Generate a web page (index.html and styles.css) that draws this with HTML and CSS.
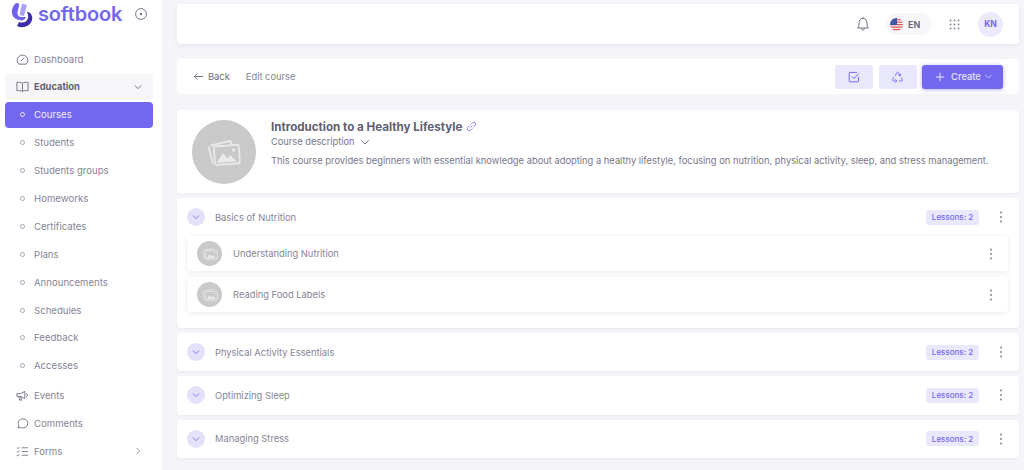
FILE: index.html
```html
<!DOCTYPE html>
<html lang="en">
<head>
<meta charset="utf-8">
<title>Edit course</title>
<link rel="stylesheet" href="styles.css">
</head>
<body>
<svg class="defs" width="0" height="0" aria-hidden="true">
  <symbol id="pic" viewBox="0 0 32 26">
    <path d="M3 7 L22 2.5 L23.5 7" fill="none" stroke="currentColor" stroke-width="1.6"/>
    <path d="M1.5 8 L5.5 24" fill="none" stroke="currentColor" stroke-width="1.6"/>
    <rect x="7" y="7" width="23.5" height="17.5" rx="1" fill="none" stroke="currentColor" stroke-width="1.6" transform="rotate(-4 18 16)"/>
    <path d="M9 23 L15 14 L19 19 L22 16 L28 22 Z" fill="currentColor"/>
    <circle cx="25" cy="11" r="1.6" fill="currentColor"/>
  </symbol>
  <symbol id="chev" viewBox="0 0 12 12"><path d="M2.5 4.5 L6 8 L9.5 4.5" fill="none" stroke="currentColor" stroke-width="1" stroke-linecap="round" stroke-linejoin="round"/></symbol>
  <symbol id="dots" viewBox="0 0 4 14"><circle cx="2" cy="2.5" r="1"/><circle cx="2" cy="7" r="1"/><circle cx="2" cy="11.5" r="1"/></symbol>
</svg>
<div class="app">
  <aside class="sidebar">
    <div class="brand">
      <svg class="logo" width="22" height="26" viewBox="0 0 22 26">
        <path d="M4 2 C6 0 9 1 8 4 L6.5 10 C6 13 8 15 11 15 L15 15 C14 18 11 19 8 18 C3 17 0 13 1 8 C1.4 5.5 2.5 3.5 4 2 Z" fill="#6f63ea"/>
        <path d="M11 1.5 L16 3 L13 14 L8.5 13 Z" fill="#a9a2f4"/>
        <path d="M16 10 C20 10 22 14 21 18 C19.5 24 12 27 6 24 L8 20 C12 21.5 16 20 17 16 C17.5 14 17 12 16 10 Z" fill="#3b2fa8"/>
      </svg>
      <span class="brand-name">softbook</span>
      <svg class="brand-pin" width="14" height="14" viewBox="0 0 14 14"><circle cx="7" cy="7" r="5.4" fill="none" stroke="#77768a" stroke-width="1"/><circle cx="7" cy="7" r="1.2" fill="#77768a"/></svg>
    </div>
    <nav class="nav">
      <a class="item">
        <svg class="ico" viewBox="0 0 14 14"><path d="M3 12 A5.7 5.7 0 1 1 11 12 Z" fill="none" stroke="currentColor"/><path d="M5.5 8.5 L9 5" stroke="currentColor"/></svg>
        <span>Dashboard</span></a>
      <a class="item group">
        <svg class="ico" viewBox="0 0 14 14"><path d="M7 3.5 C5.5 2.4 3 2.3 1 2.6 V11.5 C3 11.2 5.5 11.3 7 12.4 C8.5 11.3 11 11.2 13 11.5 V2.6 C11 2.3 8.5 2.4 7 3.5 Z M7 3.5 V12.4" fill="none" stroke="currentColor"/></svg>
        <span>Education</span>
        <svg class="caret" viewBox="0 0 12 12"><use href="#chev"/></svg></a>
      <a class="item sub active"><i class="bullet"></i><span>Courses</span></a>
      <a class="item sub"><i class="bullet"></i><span>Students</span></a>
      <a class="item sub"><i class="bullet"></i><span>Students groups</span></a>
      <a class="item sub"><i class="bullet"></i><span>Homeworks</span></a>
      <a class="item sub"><i class="bullet"></i><span>Certificates</span></a>
      <a class="item sub"><i class="bullet"></i><span>Plans</span></a>
      <a class="item sub"><i class="bullet"></i><span>Announcements</span></a>
      <a class="item sub"><i class="bullet"></i><span>Schedules</span></a>
      <a class="item sub"><i class="bullet"></i><span>Feedback</span></a>
      <a class="item sub last"><i class="bullet"></i><span>Accesses</span></a>
      <a class="item">
        <svg class="ico" viewBox="0 0 14 14"><path d="M1 5 H5 L9.5 2.5 V10.5 L5 8 H1 Z M3 8 L4 12 H6 L5 8 M11 4.5 C12.7 5.5 12.7 7.5 11 8.5" fill="none" stroke="currentColor"/></svg>
        <span>Events</span></a>
      <a class="item">
        <svg class="ico" viewBox="0 0 14 14"><path d="M2.3 12 L3 9.5 C1 6 3.5 2 7.3 2 C11 2 13 5 12.6 7.5 C12 11 8 12.8 4.8 11.2 Z" fill="none" stroke="currentColor"/></svg>
        <span>Comments</span></a>
      <a class="item">
        <svg class="ico" viewBox="0 0 14 14"><path d="M1 3 L2 4 L3.5 2 M1 7 L2 8 L3.5 6 M1 11 L2 12 L3.5 10 M6 3 H13 M6 7 H13 M6 11 H13" fill="none" stroke="currentColor" stroke-width=".9"/></svg>
        <span>Forms</span>
        <svg class="caret right" viewBox="0 0 12 12"><use href="#chev"/></svg></a>
    </nav>
  </aside>

  <main class="main">
    <header class="topbar">
      <svg class="bell" width="16" height="16" viewBox="0 0 16 16"><path d="M2.5 12 C3.5 11 4 10 4 7.5 C4 4.5 5.5 2.3 8 2.3 C10.5 2.3 12 4.5 12 7.5 C12 10 12.5 11 13.5 12 Z M6.5 12.5 C6.7 14.5 9.3 14.5 9.5 12.5 M8 2.3 V1.2" fill="none" stroke="#6e6d80" stroke-width="1" stroke-linejoin="round"/></svg>
      <div class="lang">
        <svg class="flag" width="13" height="13" viewBox="0 0 13 13">
          <defs><clipPath id="flagclip"><circle cx="6.5" cy="6.5" r="6.5"/></clipPath></defs>
          <g clip-path="url(#flagclip)">
            <rect width="13" height="13" fill="#f4f0f0"/>
            <path d="M0 1.5 H13 M0 4 H13 M0 6.5 H13 M0 9 H13 M0 11.5 H13" stroke="#e0545a" stroke-width="1.25"/>
            <rect width="7" height="7" fill="#3d5aa8"/>
          </g>
        </svg>
        <span>EN</span>
      </div>
      <svg class="apps" width="11" height="11" viewBox="0 0 11 11" fill="#8a899a"><circle cx="1.5" cy="1.5" r="1"/><circle cx="5.5" cy="1.5" r="1"/><circle cx="9.5" cy="1.5" r="1"/><circle cx="1.5" cy="5.5" r="1"/><circle cx="5.5" cy="5.5" r="1"/><circle cx="9.5" cy="5.5" r="1"/><circle cx="1.5" cy="9.5" r="1"/><circle cx="5.5" cy="9.5" r="1"/><circle cx="9.5" cy="9.5" r="1"/></svg>
      <div class="avatar">KN</div>
    </header>

    <section class="actions">
      <a class="back">
        <svg width="11" height="11" viewBox="0 0 12 12"><path d="M11 6 H1.5 M5 2.5 L1.5 6 L5 9.5" fill="none" stroke="#6e6d80" stroke-width="1"/></svg>
        <span>Back</span>
      </a>
      <span class="crumb">Edit course</span>
      <div class="spacer"></div>
      <button class="btn soft">
        <svg width="12" height="12" viewBox="0 0 12 12"><path d="M10.5 6 V10 A.8 .8 0 0 1 9.7 10.8 H2 A.8 .8 0 0 1 1.2 10 V2.2 A.8 .8 0 0 1 2 1.4 H9" fill="none" stroke="#7367f0" stroke-width="1"/><path d="M4 5.5 L6 7.5 L10.8 2.5" fill="none" stroke="#7367f0" stroke-width="1"/></svg>
      </button>
      <button class="btn soft">
        <svg width="13" height="13" viewBox="0 0 13 13"><path d="M4.2 5.8 L5.8 2.6 Q6.5 1.6 7.3 2.6 L9 5.5 M9.6 3.8 L9.2 5.8 L7.2 5.3 M3 7 L1.6 9.6 Q1.2 11 2.6 11 H5.6 M4.2 9.4 L5.9 11 L4.2 12.6 M8 11 H10.4 Q11.8 11 11.2 9.6 L10 7.4" fill="none" stroke="#7367f0" stroke-width=".9"/></svg>
      </button>
      <button class="btn primary">
        <svg width="10" height="10" viewBox="0 0 10 10"><path d="M5 .8 V9.2 M.8 5 H9.2" stroke="#e8e6fc" stroke-width="1"/></svg>
        <span>Create</span>
        <svg class="btn-caret" viewBox="0 0 12 12"><use href="#chev"/></svg>
      </button>
    </section>

    <section class="course">
      <div class="thumb"><svg width="34" height="28"><use href="#pic"/></svg></div>
      <div class="course-body">
        <h1 class="course-title">Introduction to a Healthy Lifestyle
          <svg width="11" height="11" viewBox="0 0 12 12"><path d="M5 7 L7 5 M4 5 L2 7 A2.1 2.1 0 0 0 5 10 L7 8 M8 7 L10 5 A2.1 2.1 0 0 0 7 2 L5 4" fill="none" stroke="#7367f0" stroke-width=".9"/></svg>
        </h1>
        <div class="course-toggle"><span>Course description</span><svg width="12" height="12" viewBox="0 0 12 12"><use href="#chev"/></svg></div>
        <p class="course-text">This course provides beginners with essential knowledge about adopting a healthy lifestyle, focusing on nutrition, physical activity, sleep, and stress management.</p>
      </div>
    </section>

    <section class="module">
      <div class="module-head">
        <span class="toggle"><svg width="10" height="10" viewBox="0 0 12 12"><use href="#chev"/></svg></span>
        <span class="module-name">Basics of Nutrition</span>
        <span class="badge">Lessons: 2</span>
        <svg class="more" width="4" height="14" viewBox="0 0 4 14"><use href="#dots"/></svg>
      </div>
      <div class="lessons">
        <div class="lesson">
          <div class="lesson-thumb"><svg width="16" height="13"><use href="#pic"/></svg></div>
          <span class="lesson-name">Understanding Nutrition</span>
          <svg class="more" width="4" height="14" viewBox="0 0 4 14"><use href="#dots"/></svg>
        </div>
        <div class="lesson">
          <div class="lesson-thumb"><svg width="16" height="13"><use href="#pic"/></svg></div>
          <span class="lesson-name">Reading Food Labels</span>
          <svg class="more" width="4" height="14" viewBox="0 0 4 14"><use href="#dots"/></svg>
        </div>
      </div>
    </section>
    <section class="module">
      <div class="module-head">
        <span class="toggle"><svg width="10" height="10" viewBox="0 0 12 12"><use href="#chev"/></svg></span>
        <span class="module-name">Physical Activity Essentials</span>
        <span class="badge">Lessons: 2</span>
        <svg class="more" width="4" height="14" viewBox="0 0 4 14"><use href="#dots"/></svg>
      </div>
    </section>
    <section class="module">
      <div class="module-head">
        <span class="toggle"><svg width="10" height="10" viewBox="0 0 12 12"><use href="#chev"/></svg></span>
        <span class="module-name">Optimizing Sleep</span>
        <span class="badge">Lessons: 2</span>
        <svg class="more" width="4" height="14" viewBox="0 0 4 14"><use href="#dots"/></svg>
      </div>
    </section>
    <section class="module">
      <div class="module-head">
        <span class="toggle"><svg width="10" height="10" viewBox="0 0 12 12"><use href="#chev"/></svg></span>
        <span class="module-name">Managing Stress</span>
        <span class="badge">Lessons: 2</span>
        <svg class="more" width="4" height="14" viewBox="0 0 4 14"><use href="#dots"/></svg>
      </div>
    </section>
  </main>
</div>
</body>
</html>
```

FILE: styles.css
```css
* { box-sizing: border-box; }
html, body { margin: 0; height: 470px; overflow: hidden; }
body {
  font-family: "Inter", "Liberation Sans", sans-serif;
  font-size: 9.35px;
  color: #6e6d80;
  background: #f5f5f9;
}
.defs { position: absolute; }
.app { display: flex; height: 470px; }

.sidebar { width: 162px; flex: none; background: #fff; padding: 0 9px 0 5px; }
.brand { display: flex; align-items: center; height: 46px; padding: 0 0 18px 6px; }
.logo { flex: none; margin-top: 2px; }
.brand-name { font-size: 20px; font-weight: 600; color: #7367f0; margin-left: 5px; letter-spacing: -.15px; line-height: 28px; }
.brand-pin { margin-left: 12px; }
.nav { display: flex; flex-direction: column; gap: 1.9px; }
.item { display: flex; align-items: center; height: 26px; padding: 0 8px 0 11px; border-radius: 4px; color: #858496; font-size: 9.6px; }
.item.last { margin-bottom: 2px; }
.ico { width: 13px; height: 13px; flex: none; margin-right: 5px; color: #6e6d80; }
.group { background: #f6f6f8; color: #5f5e72; font-weight: 700; font-size: 9.35px; }
.caret { width: 10px; height: 10px; margin-left: auto; margin-right: 2px; }
.caret.right { transform: rotate(-90deg); }
.bullet { width: 5px; height: 5px; border: 1px solid #a5a4b3; border-radius: 50%; margin: 0 9px 0 4px; flex: none; }
.active { background: #7367f0; color: #f1efff; }
.active .bullet { border-color: #e8e6fc; }

.main { flex: 1; min-width: 0; padding: 4px 5px 0 15px; display: flex; flex-direction: column; }
.topbar { height: 40px; background: #fff; border-radius: 4px; box-shadow: 0 2px 5px rgba(60,60,90,.08); display: flex; align-items: center; padding: 0 16px 0 0; justify-content: flex-end; flex: none; }
.bell { margin-right: 14px; }
.lang { display: flex; align-items: center; gap: 5px; width: 47px; height: 22px; padding-left: 5px; border-radius: 11px; background: #f7f7fb; font-size: 9px; font-weight: 600; color: #5f5e72; margin-right: 17px; }
.apps { margin-right: 18px; }
.avatar { width: 25px; height: 25px; border-radius: 50%; background: #ebe9fd; color: #7367f0; display: flex; align-items: center; justify-content: center; font-size: 8.5px; font-weight: 700; }

.actions { height: 35px; margin-top: 15px; background: #fff; border-radius: 4px; display: flex; align-items: center; padding: 0 16px; flex: none; }
.back { display: flex; align-items: center; gap: 4px; color: #6e6d80; }
.crumb { margin-left: 16px; color: #858496; }
.spacer { flex: 1; }
.btn { border: 0; height: 24px; border-radius: 3px; display: flex; align-items: center; justify-content: center; font: inherit; padding: 0; }
.soft { width: 38px; background: #e9e7fc; margin-right: 5.5px; }
.primary { width: 81px; background: #7367f0; color: #e8e6fc; gap: 6px; padding-left: 3px; box-shadow: 0 1px 4px rgba(115,103,240,.5); font-weight: 500; }
.btn-caret { width: 9px; height: 9px; margin-left: -3px; }

.course { margin-top: 16px; height: 83px; background: #fff; border-radius: 4px; display: flex; align-items: center; padding-left: 15px; flex: none; box-shadow: 0 1px 3px rgba(60,60,90,.05); }
.thumb { width: 64px; height: 64px; border-radius: 50%; background: #c9c9c9; color: #ebe9e9; display: flex; align-items: center; justify-content: center; flex: none; }
.course-body { margin-left: 15px; margin-top: -16px; }
.course-title { margin: 0; font-size: 11.6px; font-weight: 700; color: #5f5e72; display: flex; align-items: center; gap: 4px; line-height: 14px; }
.course-toggle { display: flex; align-items: center; gap: 4px; line-height: 14px; margin-top: 1px; color: #77768a; font-size: 9.3px; }
.course-text { margin: 5px 0 0; line-height: 14px; white-space: nowrap; color: #77768a; }

.module { margin-top: 5px; background: #fff; border-radius: 4px; flex: none; box-shadow: 0 1px 3px rgba(60,60,90,.08); }
.module-head { display: flex; align-items: center; height: 38.3px; padding: 0 16px 0 10px; }
.toggle { width: 18px; height: 18px; border-radius: 50%; background: #e4e1fb; color: #7367f0; display: flex; align-items: center; justify-content: center; flex: none; }
.module-name { margin-left: 10px; color: #858496; }
.badge { margin-left: auto; height: 15px; width: 53px; border-radius: 3px; background: #eae8fd; color: #7367f0; font-size: 8px; font-weight: 500; display: flex; align-items: center; justify-content: center; }
.more { fill: #858496; margin-left: 20px; flex: none; }
.lessons { padding: 0 11px 15.7px 10px; display: flex; flex-direction: column; gap: 6px; }
.lesson { height: 35px; background: #fff; border-radius: 4px; box-shadow: 0 1px 5px rgba(60,60,90,.1); display: flex; align-items: center; padding: 0 15px 0 10px; }
.lesson-thumb { width: 25px; height: 25px; border-radius: 50%; background: #c9c9c9; color: #ebe9e9; display: flex; align-items: center; justify-content: center; flex: none; }
.lesson-name { margin-left: 11px; color: #858496; }
.lesson .more { margin-left: auto; }
```
